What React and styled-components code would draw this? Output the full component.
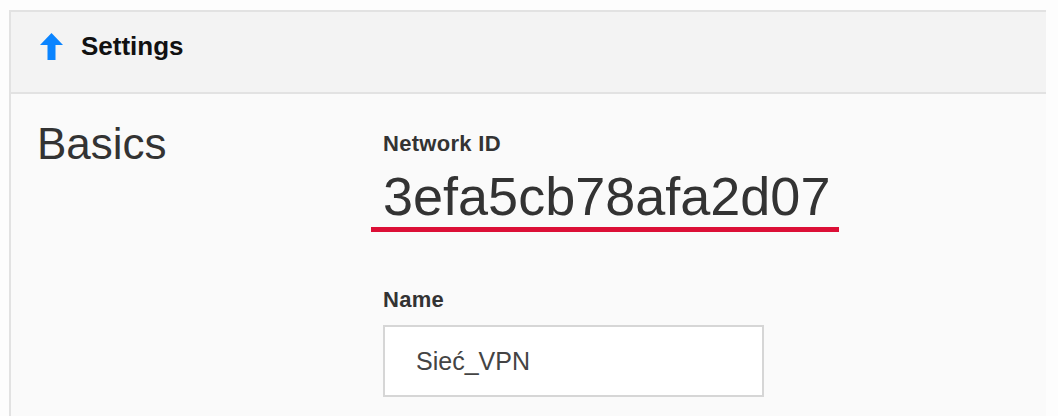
import React from "react";
import styled, { createGlobalStyle } from "styled-components";

const GlobalStyles = createGlobalStyle`
  html, body {
    margin: 0;
    padding: 0;
    background: #fdfdfd;
  }
  body {
    font-family: "Liberation Sans", Arial, sans-serif;
    color: #333;
  }
`;

const Page = styled.div`
  padding: 10px 12px 0 9px;
  height: 416px;
  box-sizing: border-box;
  overflow: hidden;
`;

const Panel = styled.section`
  border-top: 2px solid #e2e2e2;
  border-left: 2px solid #e2e2e2;
  background: #fafafa;
  min-height: 420px;
`;

const Header = styled.div`
  display: flex;
  align-items: center;
  gap: 18px;
  height: 82px;
  box-sizing: border-box;
  padding: 0 0 12px 29px;
  background: #f3f3f3;
  border-bottom: 2px solid #e2e2e2;
`;

const HeaderTitle = styled.h2`
  margin: 0;
  font-size: 26px;
  font-weight: bold;
  color: #111;
`;

const Body = styled.div`
  display: grid;
  grid-template-columns: 346px 1fr;
  padding: 24px 0 0 26px;
`;

const SectionTitle = styled.h1`
  margin: 0;
  font-size: 44px;
  font-weight: normal;
  color: #333;
  line-height: 52px;
`;

const Fields = styled.div`
  display: flex;
  flex-direction: column;
`;

const Label = styled.label`
  display: block;
  font-size: 22px;
  font-weight: bold;
  color: #333;
  letter-spacing: 0.3px;
  margin-top: ${(p) => p.$top || 0}px;
`;

const IdValue = styled.div`
  display: inline-block;
  align-self: flex-start;
  margin: 10px 0 0 -12px;
  padding: 0 9px 2px 12px;
  font-size: 54px;
  line-height: 58px;
  color: #333;
  border-bottom: 5px solid #dc0f36;
`;

const TextInput = styled.div`
  box-sizing: border-box;
  width: 381px;
  height: 72px;
  margin-top: 12px;
  padding-left: 31px;
  display: flex;
  align-items: center;
  background: #fff;
  border: 2px solid #d6d6d6;
  font-size: 25px;
  color: #444;
`;

function UpArrow() {
  return (
    <svg width="23" height="27" viewBox="0 0 23 27">
      <polygon points="11.5,0 23,12 15.5,12 15.5,27 7.5,27 7.5,12 0,12" fill="#0a84ff" />
    </svg>
  );
}

export default function App() {
  return (
    <>
      <GlobalStyles />
      <Page>
        <Panel>
          <Header>
            <UpArrow />
            <HeaderTitle>Settings</HeaderTitle>
          </Header>
          <Body>
            <SectionTitle>Basics</SectionTitle>
            <Fields>
              <Label $top={13}>Network ID</Label>
              <IdValue>3efa5cb78afa2d07</IdValue>
              <Label $top={55}>Name</Label>
              <TextInput>Sieć_VPN</TextInput>
            </Fields>
          </Body>
        </Panel>
      </Page>
    </>
  );
}
